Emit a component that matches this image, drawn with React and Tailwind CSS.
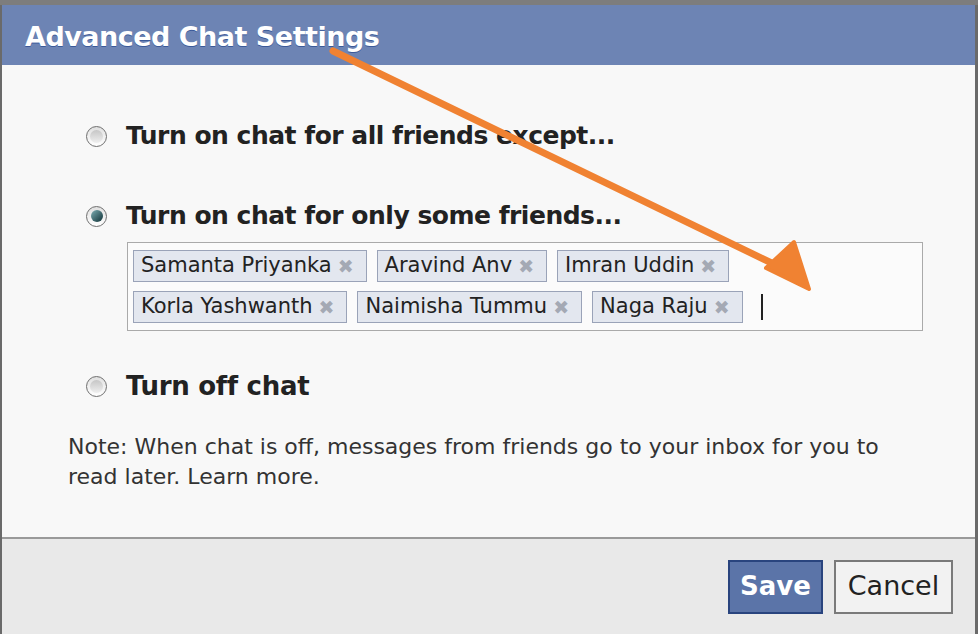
import { useState } from "react";

const friends = [
  ["Samanta Priyanka", "Aravind Anv", "Imran Uddin"],
  ["Korla Yashwanth", "Naimisha Tummu", "Naga Raju"],
];

function Radio({ checked }) {
  return (
    <span className="flex h-[21px] w-[21px] shrink-0 items-center justify-center rounded-full border-[1.5px] border-[#6f6f6f] bg-gradient-to-b from-[#e0e0e0] to-[#ffffff]">
      {checked ? (
        <span className="h-[12px] w-[12px] rounded-full bg-gradient-to-br from-[#7fb0b5] to-[#0f3338]" />
      ) : (
        <span className="h-[13px] w-[13px] rounded-full bg-gradient-to-b from-[#c6c6c6] to-[#efefef]" />
      )}
    </span>
  );
}

function Token({ name }) {
  return (
    <span className="flex h-[32px] items-center gap-[6px] border border-[#9aa3b8] bg-[#e3e7ef] pl-[7px] pr-[12px] text-[21px] text-[#222]">
      {name}
      <span className="text-[19px] font-bold text-[#a4a9b4]">✖</span>
    </span>
  );
}

export default function App() {
  const [choice, setChoice] = useState(1);
  const options = [
    "Turn on chat for all friends except...",
    "Turn on chat for only some friends...",
  ];

  return (
    <div className="relative h-[634px] w-[978px] overflow-hidden bg-[#7d7d7d] pt-[5px] font-['DejaVu_Sans',sans-serif]">
      <div className="flex h-[629px] flex-col border-l-2 border-r-[3px] border-[#6a6a6a]">
        {/* Header */}
        <div className="flex h-[60px] items-center bg-[#6d84b4] pl-[23px] pt-[4px]">
          <h1 className="text-[27px] font-bold tracking-[-0.5px] text-white [text-shadow:0_1px_0_#3b5998]">
            Advanced Chat Settings
          </h1>
        </div>

        {/* Body */}
        <div className="flex flex-1 flex-col bg-[#f8f8f8] pl-[66px] pr-[52px] pt-[56px]">
          {options.map((label, i) => (
            <div
              key={i}
              className={`flex h-[30px] items-center gap-[19px] pl-[18px] ${i === 0 ? "mb-[50px]" : "mb-[11px]"}`}
              onClick={() => setChoice(i)}
            >
              <Radio checked={choice === i} />
              <span className="text-[25px] font-bold leading-[30px] tracking-[-0.5px] text-[#222]">{label}</span>
            </div>
          ))}

          <div className="ml-[59px] flex flex-col gap-[9px] border border-[#aaaaaa] bg-[#fbfbfb] px-[5px] pb-[7px] pt-[7px]">
            {friends.map((row, r) => (
              <div key={r} className="flex items-center gap-[10px]">
                {row.map((f) => (
                  <Token key={f} name={f} />
                ))}
                {r === 1 && <span className="ml-[8px] h-[26px] w-[2px] bg-[#222]" />}
              </div>
            ))}
          </div>

          <div className="mt-[40px] flex h-[30px] items-center gap-[19px] pl-[18px]" onClick={() => setChoice(2)}>
            <Radio checked={choice === 2} />
            <span className="text-[26px] font-bold leading-[30px] tracking-[-0.3px] text-[#222]">Turn off chat</span>
          </div>

          <p className="mt-[31px] text-[22px] leading-[30px] text-[#333]">
            Note: When chat is off, messages from friends go to your inbox for you to read later. Learn more.
          </p>
        </div>

        {/* Footer */}
        <div className="flex h-[97px] shrink-0 items-center justify-end gap-[11px] border-t-2 border-[#9a9a9a] bg-[#e9e9e9] pr-[22px]">
          <button className="h-[54px] w-[95px] border-2 border-[#29447e] bg-[#5b74a8] text-[26px] font-bold text-white">
            Save
          </button>
          <button className="h-[54px] w-[119px] border-2 border-[#7a7a7a] bg-[#f2f2f2] text-[27px] text-[#222]">
            Cancel
          </button>
        </div>
      </div>

      {/* Annotation arrow */}
      <svg className="pointer-events-none absolute left-0 top-0" width="978" height="634">
        <line x1="333" y1="51" x2="782" y2="268" stroke="#f08232" strokeWidth="7" strokeLinecap="round" />
        <polygon points="766,268 794,242 809,289" fill="#f08232" stroke="#f08232" strokeWidth="4" strokeLinejoin="round" />
      </svg>
    </div>
  );
}
